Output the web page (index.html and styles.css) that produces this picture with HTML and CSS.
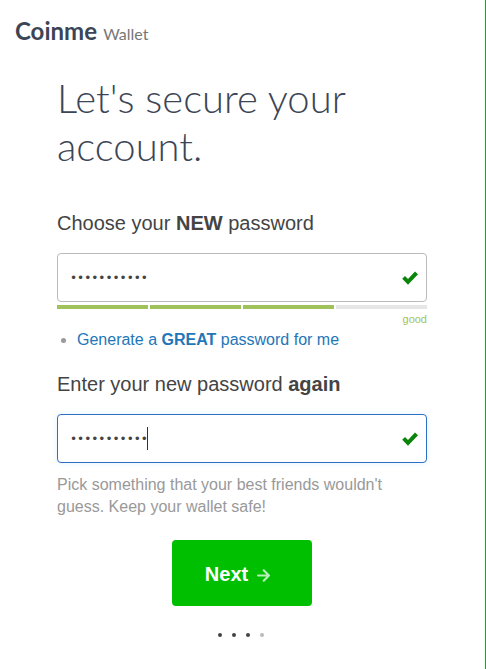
FILE: index.html
```html
<!DOCTYPE html>
<html lang="en">
<head>
<meta charset="utf-8">
<meta name="viewport" content="width=device-width, initial-scale=1">
<title>Coinme Wallet</title>
<link rel="stylesheet" href="styles.css">
</head>
<body>
<div class="page">
  <header class="brand"><strong class="brand-name">Coinme</strong> <span class="brand-sub">Wallet</span></header>
  <main class="content">
    <h1 class="title">Let's secure your account.</h1>
    <form class="form">
      <label class="label" for="password">Choose your <b>NEW</b> password</label>
      <div class="field">
        <input class="input" id="password" type="password" value="hunterhunte">
        <svg class="check" viewBox="0 0 16 14" aria-hidden="true"><path d="M0.2 7.8 3 5 6 8 13 0.4 16 3.3 6 13.8Z"/></svg>
      </div>
      <div class="meter">
        <span class="bar bar-on"></span>
        <span class="bar bar-on"></span>
        <span class="bar bar-on"></span>
        <span class="bar"></span>
      </div>
      <p class="rating">good</p>
      <ul class="hints">
        <li><a class="link" href="#">Generate a <b>GREAT</b> password for me</a></li>
      </ul>
      <label class="label" for="confirm">Enter your new password <b>again</b></label>
      <div class="field">
        <input class="input input-active" id="confirm" type="password" value="hunterhunte">
        <span class="caret"></span>
        <svg class="check" viewBox="0 0 16 14" aria-hidden="true"><path d="M0.2 7.8 3 5 6 8 13 0.4 16 3.3 6 13.8Z"/></svg>
      </div>
      <p class="help">Pick something that your best friends wouldn't guess. Keep your wallet safe!</p>
      <button class="next" type="button">Next
        <svg class="arrow" viewBox="0 0 12 12" aria-hidden="true"><path d="M1 6H11M6.2 1.2 11 6 6.2 10.8"/></svg>
      </button>
    </form>
    <div class="steps">
      <span class="step"></span>
      <span class="step"></span>
      <span class="step"></span>
      <span class="step step-todo"></span>
    </div>
  </main>
</div>
</body>
</html>
```
FILE: styles.css
```css
* {
  box-sizing: border-box;
}

body {
  margin: 0;
  background: #fff;
  color: #444;
  font-family: "Liberation Sans", Arial, sans-serif;
}

.page {
  min-height: 100vh;
  padding-top: 15px;
  border-right: 1px solid #22a12a;
  box-shadow: inset -1px 0 #e6ffe6;
}

.brand {
  padding-left: 15px;
  font-family: Lato, sans-serif;
  font-size: 24px;
  line-height: 32px;
  color: #3b4556;
}

.brand-name {
  font-weight: 700;
}

.brand-sub {
  font-size: 16px;
  color: #777;
}

.content {
  padding: 24px 58px 0 57px;
}

.title {
  margin: 0 0 39px;
  font-family: Lato, sans-serif;
  font-size: 40px;
  font-weight: 300;
  line-height: 48px;
  color: #3b4556;
}

.form {
  display: flex;
  flex-direction: column;
}

.label {
  margin-bottom: 16px;
  font-size: 20px;
  line-height: 28px;
}

.field {
  position: relative;
}

.input {
  display: block;
  width: 100%;
  height: 49px;
  padding: 0 40px 0 12px;
  border: 1px solid #bbb;
  border-radius: 4px;
  outline: 0;
  background: #fff;
  color: #444;
  font-family: "DejaVu Sans", sans-serif;
  font-size: 12px;
}

.input-active {
  border-color: #2d6fc4;
  box-shadow: 0 0 6px #e2f2ff;
}

.caret {
  position: absolute;
  top: 13px;
  left: 90px;
  width: 1px;
  height: 23px;
  background: #333;
}

.check {
  position: absolute;
  top: 18px;
  right: 9px;
  width: 16px;
  height: 14px;
  fill: #0a850a;
}

.meter {
  display: flex;
  gap: 2px;
  margin-top: 3px;
}

.bar {
  flex: 1;
  height: 4px;
  background: #e6e6e6;
}

.bar-on {
  background: #9fc35a;
}

.rating {
  margin: 3px 0 0;
  font-size: 11px;
  line-height: 14px;
  text-align: right;
  color: #9fc35a;
}

.hints {
  margin: 3px 0 19px;
  padding-left: 20px;
  font-size: 16px;
  line-height: 22px;
}

.hints li::marker {
  color: #999;
}

.link {
  color: #2376b8;
  text-decoration: none;
}

.help {
  margin: 11px 0 22px;
  font-size: 16px;
  line-height: 22px;
  color: #999;
}

.next {
  display: flex;
  align-items: center;
  align-self: center;
  gap: 9px;
  height: 66px;
  padding: 2px 42px 0 33px;
  border: 0;
  border-radius: 4px;
  background: #00bf00;
  color: #fff;
  font-family: "Liberation Sans", Arial, sans-serif;
  font-size: 20px;
  font-weight: 700;
}

.arrow {
  width: 13px;
  height: 13px;
  margin-top: 3px;
  fill: none;
  stroke: #b8efb8;
  stroke-width: 2;
  stroke-linecap: round;
  stroke-linejoin: round;
}

.steps {
  display: flex;
  justify-content: center;
  gap: 10px;
  margin-top: 27px;
  padding-right: 2px;
}

.step {
  width: 4px;
  height: 4px;
  border-radius: 50%;
  background: #444;
}

.step-todo {
  background: #bbb;
}
```
